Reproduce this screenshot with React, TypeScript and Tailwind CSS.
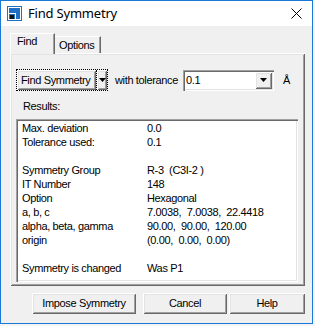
import React from 'react';

const raised =
  'shadow-[inset_1px_1px_#ffffff,inset_-1px_-1px_#696969,inset_2px_2px_#e3e3e3,inset_-2px_-2px_#a0a0a0]';
const sunken =
  'shadow-[inset_1px_1px_#a0a0a0,inset_2px_2px_#696969,inset_-1px_-1px_#ffffff,inset_-2px_-2px_#e3e3e3]';

const rows: [string, string][] = [
  ['Max. deviation', '0.0'],
  ['Tolerance used:', '0.1'],
  ['', ''],
  ['Symmetry Group', 'R-3  (C3I-2 )'],
  ['IT Number', '148'],
  ['Option', 'Hexagonal'],
  ['a, b, c', '7.0038,  7.0038,  22.4418'],
  ['alpha, beta, gamma', '90.00,  90.00,  120.00'],
  ['origin', '(0.00,  0.00,  0.00)'],
  ['', ''],
  ['Symmetry is changed', 'Was P1'],
];

function AppIcon() {
  return (
    <svg width="15" height="15" viewBox="0 0 15 15">
      <rect x="0.5" y="0.5" width="14" height="14" fill="#fff" stroke="#1f6fc5" />
      <rect x="2" y="2" width="11" height="11" fill="#1f6fc5" />
      <rect x="2" y="7" width="6" height="1" fill="#fff" />
      <rect x="8" y="7" width="1" height="6" fill="#fff" />
      <rect x="3" y="9" width="4" height="4" fill="#111" />
    </svg>
  );
}

function Arrow() {
  return (
    <svg width="7" height="4" viewBox="0 0 7 4">
      <path d="M0 0h7L3.5 4z" fill="#000" />
    </svg>
  );
}

function Btn({ label, w }: { label: string; w: string }) {
  return (
    <div className={`${w} h-[21px] bg-[#f0f0f0] ${raised} flex items-center justify-center`}>
      {label}
    </div>
  );
}

export default function App() {
  return (
    <div className="w-[315px] h-[326px] bg-[#f4f4f4] text-[11px] tracking-[-0.35px] text-black" style={{ fontFamily: '"Liberation Sans", Arial, sans-serif' }}>
      <div className="w-[313px] h-[324px] border border-[#1a78d6] bg-[#f0f0f0] flex flex-col">
        {/* title bar */}
        <div className="h-[25px] bg-white flex items-center pl-[6px] pr-[10px] shrink-0">
          <AppIcon />
          <span className="ml-[6px] text-[13px] tracking-[-0.2px]" style={{ fontFamily: '"Noto Sans", sans-serif' }}>
            Find Symmetry
          </span>
          <svg className="ml-auto" width="11" height="11" viewBox="0 0 11 11">
            <path d="M0.5 0.5l10 10M10.5 0.5l-10 10" stroke="#000" strokeWidth="1" />
          </svg>
        </div>

        {/* tabs */}
        <div className="flex items-end h-[20px] mt-[7px] pl-[9px] leading-[14px]">
          <div className="relative z-10 h-[21px] -mb-[1px] w-[45px] bg-[#f0f0f0] border-l border-t border-white border-r border-r-[#696969] shadow-[inset_-1px_0_#a0a0a0] pl-[6px]">
            Find
          </div>
          <div className="h-[17px] w-[46px] border-t border-white border-r border-r-[#696969] shadow-[inset_-1px_0_#a0a0a0] pl-[4px] pt-[1px]">
            Options
          </div>
        </div>

        {/* panel */}
        <div className={`ml-[9px] w-[295px] h-[233px] ${raised} px-[6px] pt-[16px]`}>
          <div className="flex items-center">
            <div className="flex h-[22px] border border-dotted border-black">
              <div className={`w-[79px] h-full ${raised} pl-[4px] flex items-center`}>Find Symmetry</div>
              <div className={`w-[11px] h-full ${raised} border-l border-dotted border-black flex items-center justify-center`}>
                <Arrow />
              </div>
            </div>
            <span className="ml-[7px]">with tolerance</span>
            <div className={`ml-[5px] w-[91px] h-[21px] bg-white ${sunken} flex items-center pl-[3px] pr-[2px]`}>
              <span>0.1</span>
              <div className={`ml-auto w-[17px] h-[17px] bg-[#f0f0f0] ${raised} flex items-center justify-center`}>
                <Arrow />
              </div>
            </div>
            <span className="ml-[9px]">Å</span>
          </div>

          <div className="mt-[8px] pl-[7px] leading-[14px]">Results:</div>

          <div className={`mt-[6px] w-[282px] h-[163px] bg-white ${sunken} pl-[6px] pt-[2px] leading-[14px]`}>
            {rows.map(([k, v], i) => (
              <div key={i} className="flex h-[14px]">
                <span className="w-[125px] shrink-0">{k}</span>
                <span className="whitespace-pre">{v}</span>
              </div>
            ))}
          </div>
        </div>

        {/* buttons */}
        <div className="flex mt-[7px] pl-[31px]">
          <Btn label="Impose Symmetry" w="w-[104px]" />
          <div className="ml-[7px]">
            <Btn label="Cancel" w="w-[84px]" />
          </div>
          <div className="ml-[2px]">
            <Btn label="Help" w="w-[76px]" />
          </div>
        </div>
      </div>
    </div>
  );
}
